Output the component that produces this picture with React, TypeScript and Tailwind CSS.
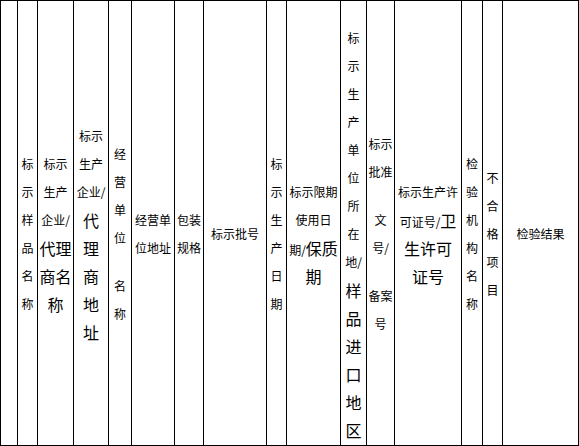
type Line = { s?: string; b?: string } | null;

const s = (t: string): Line => ({ s: t });
const b = (t: string): Line => ({ b: t });
const sb = (x: string, y: string): Line => ({ s: x, b: y });
const chars = (t: string): Line[] => t.split("").map((c) => s(c));

// cell widths include the right border
const columns: { w: string; lines: Line[] }[] = [
  { w: "w-[17px]", lines: [] },
  { w: "w-[20px]", lines: chars("标示样品名称") },
  { w: "w-[36px]", lines: [s("标示"), s("生产"), s("企业/"), b("代理"), b("商名"), b("称")] },
  { w: "w-[35px]", lines: [s("标示"), s("生产"), s("企业/"), b("代"), b("理"), b("商"), b("地"), b("址")] },
  { w: "w-[23px]", lines: [s("经"), s("营"), s("单"), s("位"), null, s("名"), s("称")] },
  { w: "w-[43px]", lines: [s("经营单"), s("位地址")] },
  { w: "w-[29px]", lines: [s("包装"), s("规格")] },
  { w: "w-[63px]", lines: [s("标示批号")] },
  { w: "w-[20px]", lines: chars("标示生产日期") },
  { w: "w-[54px]", lines: [s("标示限期"), s("使用日"), sb("期/", "保质"), b("期")] },
  {
    w: "w-[26px]",
    lines: [...chars("标示生产单位所在"), s("地/"), ...("样品进口地区".split("").map((c) => b(c)))],
  },
  { w: "w-[28px]", lines: [s("标示"), s("批准"), null, s("文"), s("号/"), null, s("备案"), s("号")] },
  { w: "w-[67px]", lines: [s("标示生产许"), sb("可证号/", "卫"), b("生许可"), b("证号")] },
  { w: "w-[21px]", lines: chars("检验机构名称") },
  { w: "w-[20px]", lines: chars("不合格项目") },
  { w: "w-[76px]", lines: [s("检验结果")] },
];

export default function App() {
  return (
    <div className="flex h-[446px] w-[579px] border border-r-0 border-black bg-white text-black font-['Noto_Sans_CJK_SC',sans-serif]">
      {columns.map((col, i) => (
        <div
          key={i}
          className={`${col.w} flex shrink-0 flex-col items-center justify-center border-r border-black pt-[21px]`}
        >
          {col.lines.map((ln, j) =>
            ln === null ? (
              <div key={j} className="h-[20px] shrink-0" />
            ) : (
              <div key={j} className="h-[28px] shrink-0 whitespace-nowrap text-center text-[12px] leading-[28px]">
                {ln.s && <span className="text-[12px]">{ln.s}</span>}
                {ln.b && <span className="text-[16px]">{ln.b}</span>}
              </div>
            )
          )}
        </div>
      ))}
    </div>
  );
}
